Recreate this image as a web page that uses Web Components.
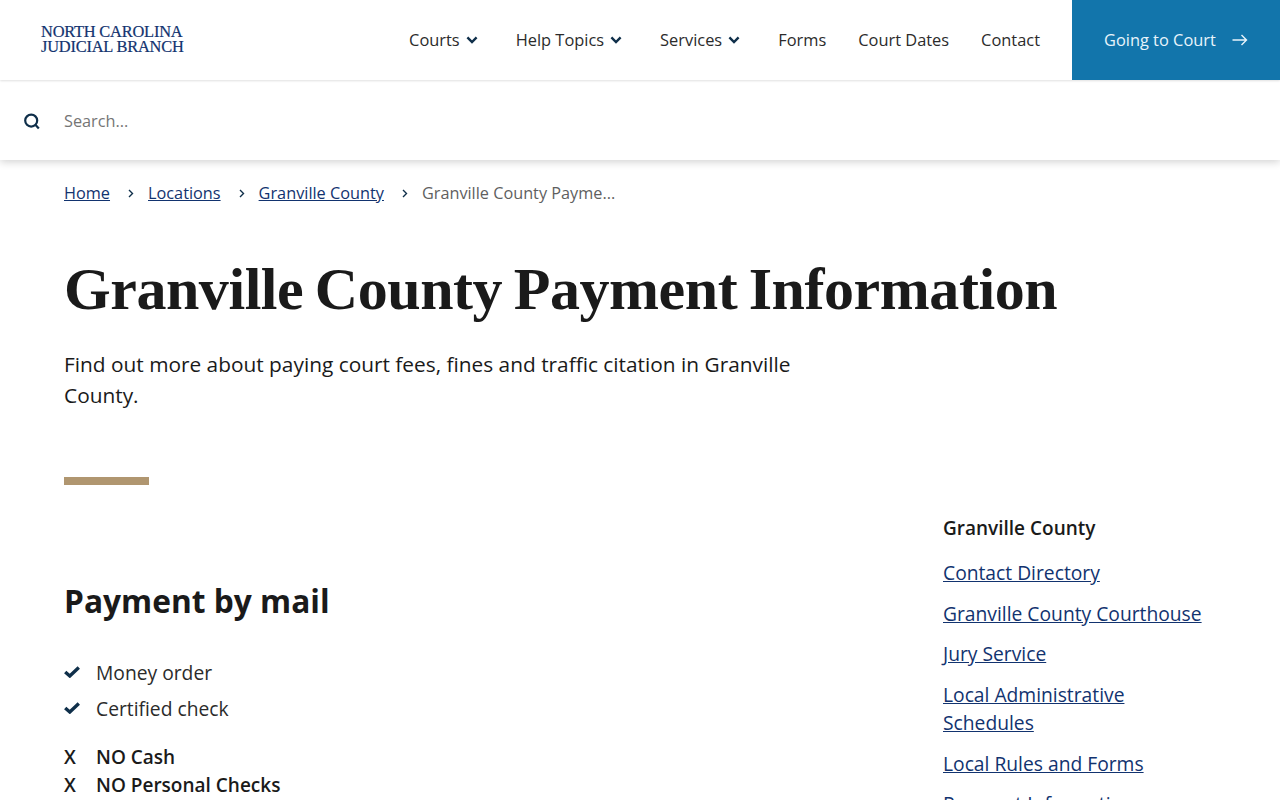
<!DOCTYPE html>
<html lang="en">
<head>
<meta charset="utf-8">
<title>Granville County Payment Information</title>
<style>
  html, body { margin: 0; height: 800px; overflow: hidden; background: #fff; }
  body { font-family: "Open Sans", sans-serif; color: #1a1a1a; }
</style>
</head>
<body>
<site-header></site-header>
<search-bar></search-bar>
<bread-crumbs></bread-crumbs>
<page-hero title="Granville County Payment Information">Find out more about paying court fees, fines and traffic citation in Granville County.</page-hero>
<page-body></page-body>

<script>
const chevron = `<svg width="12" height="8" viewBox="0 0 12 8" fill="none" stroke="#0f2f4a" stroke-width="2.4"><path d="M1.4 1.4 6 6l4.6-4.6"/></svg>`;

class SiteHeader extends HTMLElement {
    constructor() {
        super();
        this.attachShadow({ mode: "open" });
    }

    connectedCallback() {
        this.shadowRoot.innerHTML = `
            <style>
                :host { display: flex; height: 80px; align-items: stretch; background: #fff; position: relative; z-index: 2; box-shadow: 0 1px 2px rgba(0,0,0,.12); }
                .logo { margin: 24px 0 0 41px; width: 150px; font: 400 16.4px/15px "Liberation Serif", serif; color: #12336f; -webkit-text-stroke: .2px #12336f; letter-spacing: -.2px; }
                nav { margin-left: auto; display: flex; align-items: center; font-size: 16.4px; line-height: 22px; color: #2b2b2b; }
                nav a { display: flex; align-items: center; gap: 6px; margin-right: 32px; white-space: nowrap; }
                nav a.drop { margin-right: 38px; }
                .cta { width: 208px; box-sizing: border-box; background: #1275ab; color: #e8f4fb; display: flex; align-items: center; padding-left: 32px; gap: 16px; font-size: 16.4px; line-height: 22px; }
            </style>
            <div class="logo">NORTH CAROLINA JUDICIAL BRANCH</div>
            <nav>
                <a class="drop">Courts ${chevron}</a>
                <a class="drop">Help Topics ${chevron}</a>
                <a class="drop">Services ${chevron}</a>
                <a>Forms</a>
                <a>Court Dates</a>
                <a>Contact</a>
            </nav>
            <div class="cta">Going to Court
                <svg width="16" height="12" viewBox="0 0 16 12" fill="none" stroke="#e8f4fb" stroke-width="1.4"><path d="M0.5 6h14M9.5 1l5 5-5 5"/></svg>
            </div>
        `;
    }
}
customElements.define("site-header", SiteHeader);

class SearchBar extends HTMLElement {
    constructor() {
        super();
        this.attachShadow({ mode: "open" });
    }

    connectedCallback() {
        this.shadowRoot.innerHTML = `
            <style>
                :host { display: flex; box-sizing: border-box; align-items: center; height: 80px; background: #fff; box-shadow: 0 2px 8px rgba(0,0,0,.18); position: relative; z-index: 1; padding: 2px 0 0 24px; gap: 24px; font-size: 16.3px; color: #757575; }
                svg { display: block; }
            </style>
            <svg width="16" height="17" viewBox="0 0 16 17" fill="none" stroke="#0f2f4a" stroke-width="2.2"><circle cx="7.2" cy="7.6" r="6"/><path d="m11.6 12 3.2 3.6"/></svg>
            <span>Search...</span>
        `;
    }
}
customElements.define("search-bar", SearchBar);

class BreadCrumbs extends HTMLElement {
    constructor() {
        super();
        this.attachShadow({ mode: "open" });
    }

    connectedCallback() {
        const sep = `<svg width="6" height="9" viewBox="0 0 6 9" fill="none" stroke="#0f2f4a" stroke-width="1.4"><path d="m1 1 3.5 3.5L1 8"/></svg>`;
        this.shadowRoot.innerHTML = `
            <style>
                :host { display: flex; align-items: center; gap: 16px; padding: 22px 64px 0; height: 22px; font-size: 16.3px; line-height: 22px; color: #5f5f5f; }
                a { color: #12336f; text-decoration: underline; }
                svg { margin: 0 -2px 0 2px; }
                span { font-size: 16.25px; }
            </style>
            <a>Home</a>${sep}<a>Locations</a>${sep}<a>Granville County</a>${sep}<span>Granville County Payme...</span>
        `;
    }
}
customElements.define("bread-crumbs", BreadCrumbs);

class PageHero extends HTMLElement {
    constructor() {
        super();
        this.attachShadow({ mode: "open" });
    }

    connectedCallback() {
        this.shadowRoot.innerHTML = `
            <style>
                :host { display: block; padding: 45px 64px 0; }
                h1 { margin: 0; font: 700 60px/80px "Liberation Serif", serif; color: #1a1a1a; white-space: nowrap; letter-spacing: -.45px; word-spacing: -3px; }
                p { margin: 20px 0 0; width: 760px; font-size: 20.85px; line-height: 31px; color: #1a1a1a; }
                .rule { width: 85px; height: 8px; background: #b09670; margin-top: 66px; }
            </style>
            <h1>${this.getAttribute("title")}</h1>
            <p><slot></slot></p>
            <div class="rule"></div>
        `;
    }
}
customElements.define("page-hero", PageHero);

class PageBody extends HTMLElement {
    constructor() {
        super();
        this.attachShadow({ mode: "open" });
    }

    connectedCallback() {
        const check = `<svg width="16" height="12" viewBox="0 0 16 12" fill="none" stroke="#0f2f4a" stroke-width="3.4"><path d="M1.2 6 5.8 10 14.8 1.6"/></svg>`;
        this.shadowRoot.innerHTML = `
            <style>
                :host { display: grid; grid-template-columns: 1fr 273px; padding: 0 64px 0; column-gap: 32px; }
                h2 { margin: 94px 0 0; font-size: 31.7px; line-height: 44px; font-weight: 700; color: #1a1a1a; }
                ul { list-style: none; margin: 31px 0 0; padding: 0; font-size: 19.25px; }
                li { display: flex; align-items: center; gap: 16px; height: 36px; color: #2b2b2b; }
                .no { margin-top: 17px; display: grid; grid-template-columns: 32px 1fr; font-size: 19px; line-height: 28px; font-weight: 600; color: #1a1a1a; }
                aside { padding-top: 30px; }
                h3 { margin: 0; font-size: 19px; line-height: 26px; font-weight: 600; color: #1a1a1a; }
                aside a { display: block; margin-top: 12.7px; font-size: 19.25px; line-height: 28px; color: #12336f; text-decoration: underline; }
                h3 + a { margin-top: 18px; }
            </style>
            <section>
                <h2>Payment by mail</h2>
                <ul>
                    <li>${check}Money order</li>
                    <li>${check}Certified check</li>
                </ul>
                <div class="no">
                    <span>X</span><span>NO Cash</span>
                    <span>X</span><span>NO Personal Checks</span>
                </div>
            </section>
            <aside>
                <h3>Granville County</h3>
                <a>Contact Directory</a>
                <a>Granville County Courthouse</a>
                <a>Jury Service</a>
                <a>Local Administrative Schedules</a>
                <a>Local Rules and Forms</a>
                <a>Payment Information</a>
            </aside>
        `;
    }
}
customElements.define("page-body", PageBody);
</script>
</body>
</html>
